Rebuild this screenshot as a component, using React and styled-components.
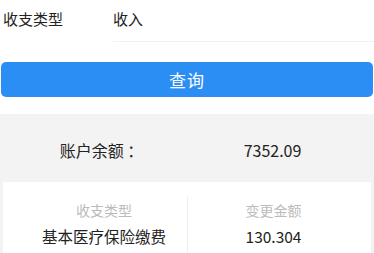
import React from 'react';
import styled, { createGlobalStyle } from 'styled-components';

const GlobalStyle = createGlobalStyle`
  html, body {
    margin: 0;
    padding: 0;
    background: #ffffff;
    font-family: "Noto Sans CJK SC", "Liberation Sans", sans-serif;
  }
`;

const Page = styled.div`
  width: 374px;
  height: 253px;
  overflow: hidden;
  display: flex;
  flex-direction: column;
`;

const FilterRow = styled.div`
  height: 42px;
  display: flex;
`;

const FilterLabel = styled.div`
  width: 110px;
  padding: 11px 0 0 3px;
  font-size: 15px;
  color: #222;
  line-height: 1;
`;

const FilterValue = styled.div`
  flex: 1;
  padding-top: 11px;
  font-size: 15px;
  line-height: 1;
  color: #222;
  border-bottom: 1px solid #f2f2f2;
  box-sizing: border-box;
`;

const QueryButton = styled.button`
  margin: 20px 1px 0 1px;
  height: 35px;
  border: 0;
  border-radius: 5px;
  background: #2b8ef5;
  color: #ffffff;
  font-family: inherit;
  font-size: 17px;
  letter-spacing: 1px;
  outline: none;
  cursor: pointer;
`;

const Panel = styled.div`
  margin-top: 17px;
  flex: 1;
  background: #f3f3f3;
  display: flex;
  flex-direction: column;
`;

const BalanceRow = styled.div`
  height: 68px;
  padding-top: 3px;
  box-sizing: border-box;
  display: grid;
  grid-template-columns: 187px 1fr;
  align-items: center;
  font-size: 16px;
  color: #222;
`;

const Cell = styled.div`
  text-align: center;
  padding-left: ${({ left }) => left || 0}px;
  padding-right: ${({ right }) => right || 0}px;
`;

const Card = styled.div`
  flex: 1;
  margin: 0 3px;
  background: #ffffff;
  display: grid;
  grid-template-columns: 184px 1fr;
  padding-top: 14px;
`;

const Column = styled.div`
  display: flex;
  flex-direction: column;
  align-items: center;
  padding-left: ${({ left }) => left || 0}px;
  padding-right: ${({ right }) => right || 0}px;
  border-left: ${({ divider }) => (divider ? '1px solid #efefef' : 'none')};
`;

const ColHead = styled.div`
  font-size: 14px;
  color: #bbbbbb;
  line-height: 1;
  margin-top: 7px;
`;

const ColValue = styled.div`
  font-size: 15.5px;
  color: #222;
  line-height: 1;
  margin-top: 12px;
`;

export default function App() {
  return (
    <Page>
      <GlobalStyle />
      <FilterRow>
        <FilterLabel>收支类型</FilterLabel>
        <FilterValue>收入</FilterValue>
      </FilterRow>
      <QueryButton>查询</QueryButton>
      <Panel>
        <BalanceRow>
          <Cell left={16}>账户余额 ：</Cell>
          <Cell right={16}>7352.09</Cell>
        </BalanceRow>
        <Card>
          <Column left={18}>
            <ColHead>收支类型</ColHead>
            <ColValue>基本医疗保险缴费</ColValue>
          </Column>
          <Column divider right={12}>
            <ColHead>变更金额</ColHead>
            <ColValue>130.304</ColValue>
          </Column>
        </Card>
      </Panel>
    </Page>
  );
}
